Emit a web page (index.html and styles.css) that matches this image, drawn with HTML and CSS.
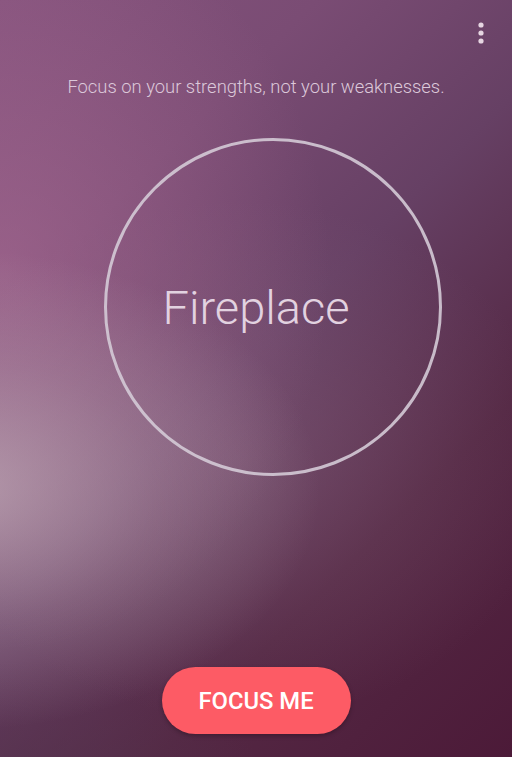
FILE: index.html
```html
<!DOCTYPE html>
<html>
<head>
<meta charset="utf-8">
<link rel="stylesheet" href="styles.css">
</head>
<body>
<div class="screen">
  <div class="toolbar">
    <button class="menu" aria-label="More options">
      <svg width="8" height="22" viewBox="0 0 8 22"><circle cx="4" cy="3" r="2.6"/><circle cx="4" cy="11" r="2.6"/><circle cx="4" cy="19" r="2.6"/></svg>
    </button>
  </div>
  <p class="quote">Focus on your strengths, not your weaknesses.</p>
  <div class="ring-wrap">
    <div class="ring"></div>
    <div class="title">Fireplace</div>
  </div>
  <div class="spacer"></div>
  <div class="actions">
    <button class="cta">FOCUS ME</button>
  </div>
</div>
</body>
</html>
```
FILE: styles.css
```css
html, body {
  margin: 0;
  padding: 0;
}
body {
  width: 512px;
  height: 757px;
  overflow: hidden;
  font-family: Roboto, "Noto Sans", sans-serif;
}
.screen {
  width: 512px;
  height: 757px;
  display: flex;
  flex-direction: column;
  background:
    radial-gradient(ellipse 360px 240px at -40px 490px, rgba(200, 180, 190, 0.72), rgba(200, 180, 190, 0.28) 55%, rgba(200, 180, 190, 0) 100%),
    radial-gradient(ellipse 240px 140px at 30px 800px, rgba(84, 52, 78, 0.7), rgba(84, 52, 78, 0) 100%),
    radial-gradient(ellipse 330px 380px at 0px 270px, rgba(180, 115, 155, 0.5), rgba(180, 115, 155, 0) 100%),
    radial-gradient(ellipse 320px 260px at 240px 460px, rgba(150, 115, 140, 0.35), rgba(150, 115, 140, 0) 100%),
    linear-gradient(135deg, #84527c 0%, #7a4c74 25%, #664064 48%, #542844 72%, #4c1a38 100%);
}
.toolbar {
  height: 56px;
  display: flex;
  justify-content: flex-end;
  align-items: center;
  padding-right: 27px;
  box-sizing: border-box;
}
.menu {
  border: 0;
  background: none;
  padding: 0;
  display: flex;
  margin-top: 10px;
  fill: #e6d6e2;
}
.quote {
  margin: 20px 0 0;
  text-align: center;
  font-weight: 300;
  font-size: 18.4px;
  color: #dcc8da;
}
.ring-wrap {
  margin-top: 41px;
  height: 338px;
  display: flex;
  align-items: center;
  justify-content: center;
  position: relative;
}
.ring {
  position: absolute;
  left: 104px;
  top: 0;
  width: 332px;
  height: 332px;
  border: 3px solid rgba(212, 202, 214, 0.9);
  border-radius: 50%;
}
.title {
  font-weight: 300;
  font-size: 47px;
  color: #e2d2e0;
  position: relative;
  left: 0px;
}
.spacer {
  flex: 1;
}
.actions {
  display: flex;
  justify-content: center;
  padding-bottom: 23px;
}
.cta {
  width: 189px;
  height: 67px;
  border: 0;
  border-radius: 34px;
  background: #fd5b65;
  color: #ffffff;
  font-family: Roboto, sans-serif;
  font-weight: 500;
  font-size: 23.8px;
  box-shadow: 0 2px 4px rgba(0, 0, 0, 0.25);
}
```
